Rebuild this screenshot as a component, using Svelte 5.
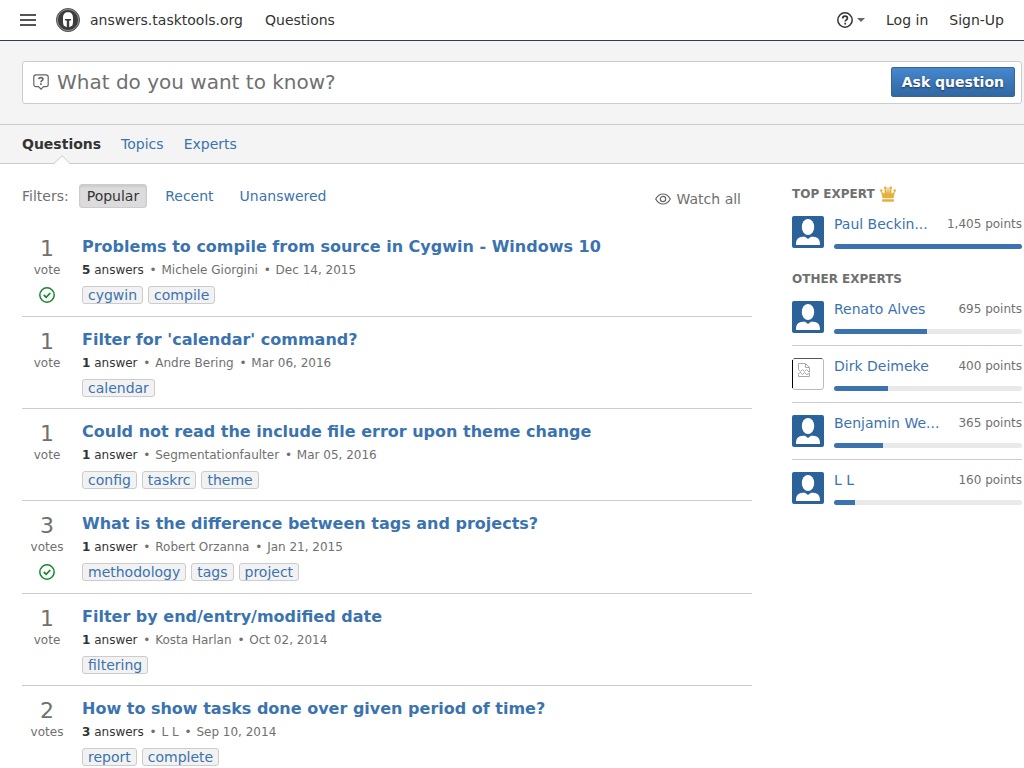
<script>
  const questions = [
    { title: 'Problems to compile from source in Cygwin - Windows 10', votes: 1, answers: 5, author: 'Michele Giorgini', date: 'Dec 14, 2015', accepted: true, tags: ['cygwin', 'compile'] },
    { title: "Filter for 'calendar' command?", votes: 1, answers: 1, author: 'Andre Bering', date: 'Mar 06, 2016', accepted: false, tags: ['calendar'] },
    { title: 'Could not read the include file error upon theme change', votes: 1, answers: 1, author: 'Segmentationfaulter', date: 'Mar 05, 2016', accepted: false, tags: ['config', 'taskrc', 'theme'] },
    { title: 'What is the difference between tags and projects?', votes: 3, answers: 1, author: 'Robert Orzanna', date: 'Jan 21, 2015', accepted: true, tags: ['methodology', 'tags', 'project'] },
    { title: 'Filter by end/entry/modified date', votes: 1, answers: 1, author: 'Kosta Harlan', date: 'Oct 02, 2014', accepted: false, tags: ['filtering'] },
    { title: 'How to show tasks done over given period of time?', votes: 2, answers: 3, author: 'L L', date: 'Sep 10, 2014', accepted: false, tags: ['report', 'complete'] }
  ];
  const top = [{ name: 'Paul Beckin...', points: '1,405', share: 100, photo: true }];
  const others = [
    { name: 'Renato Alves', points: '695', share: 49.5, photo: true },
    { name: 'Dirk Deimeke', points: '400', share: 28.5, photo: false },
    { name: 'Benjamin We...', points: '365', share: 26, photo: true },
    { name: 'L L', points: '160', share: 11.2, photo: true }
  ];
  let filter = $state('Popular');
</script>

{#snippet expert(e)}
  <li class="expert">
    {#if e.photo}
      <svg class="avatar" viewBox="0 0 32 32" aria-hidden="true">
        <rect width="32" height="32" rx="2" fill="#2a6299" />
        <ellipse cx="16" cy="11" rx="6.200" ry="8" fill="#fff" />
        <path d="M4 29c0-4.500 1-6.500 3.500-7.500 2-.8 4-.8 5.500-.8l3 2.300 3-2.300c1.500 0 3.500 0 5.500.8C27 22.500 28 24.500 28 29z" fill="#fff" />
      </svg>
    {:else}
      <svg class="avatar" viewBox="0 0 32 32" fill="none" aria-hidden="true">
        <rect x=".5" y=".5" width="31" height="31" rx="2.500" stroke="#bbb" />
        <path d="M30 .5H2" stroke="#555" />
        <path d="M.5 2v28" stroke="#000" />
        <path d="M6.500 12V5.500h7l4 4V14M13.500 5.500v4h4M6.500 11.500l2 2 2-2 2 2 2-2 3 3M6.500 18.500v-3l2-1 2 2 2-2 2 2 3-1v3z" stroke="#aaa" />
      </svg>
    {/if}
    <div class="score">
      <div class="line"><a href="#expert">{e.name}</a><span>{e.points} points</span></div>
      <div class="bar"><div class="fill" style="width: {e.share}%"></div></div>
    </div>
  </li>
{/snippet}

<header>
  <button class="plain menu" aria-label="Menu">
    <svg width="16" height="12" viewBox="0 0 16 12" aria-hidden="true"><path d="M0 1h16M0 6h16M0 11h16" stroke="#555" stroke-width="2" /></svg>
  </button>
  <a class="brand" href="#home">
    <svg width="24" height="24" viewBox="0 0 24 24" aria-hidden="true">
      <circle cx="12" cy="12" r="11.500" fill="#3c3c3c" stroke="#555" />
      <circle cx="12" cy="12" r="10.600" fill="none" stroke="#aaa" stroke-width=".8" />
      <path d="M7 10C7 6.200 8.700 4.200 12 4.200s5 2 5 5.800v4.500l-.6 3-3.200 1.700v-6.400l1.900-.5v-1.200H8.900v1.200l1.900.5v6.400l-3.200-1.700-.6-3z" fill="#fff" />
    </svg>
    <span>answers.tasktools.org</span>
  </a>
  <a class="crumb" href="#questions">Questions</a>
  <nav class="account" aria-label="Account">
    <button class="plain help" aria-label="Help">
      <svg width="16" height="16" viewBox="0 0 16 16" fill="none" stroke="#333" aria-hidden="true">
        <circle cx="8" cy="8" r="7.200" stroke-width="1.500" />
        <path d="M5.700 6.400C5.700 5 6.600 4.200 8 4.200s2.400.8 2.400 2c0 1.600-2.200 1.700-2.200 3.400M8.200 10.800v1.600" stroke-width="1.700" />
      </svg>
      <svg width="8" height="4" viewBox="0 0 8 4" aria-hidden="true"><path d="M0 0h8L4 4z" fill="#666" /></svg>
    </button>
    <a href="#login">Log in</a>
    <a href="#signup">Sign-Up</a>
  </nav>
</header>

<section class="ask">
  <form onsubmit={(e) => e.preventDefault()}>
    <svg width="16" height="16" viewBox="0 0 16 16" fill="none" stroke="#666" aria-hidden="true">
      <path d="M3 .8h10A2.200 2.200 0 0 1 15.200 3v7.500a2.200 2.200 0 0 1-2.200 2.200h-2.500L8 15.200l-2.500-2.500H3A2.200 2.200 0 0 1 .8 10.500V3A2.200 2.200 0 0 1 3 .8z" stroke-width="1.200" />
      <path d="M5.700 5.200c.2-1.100 1-1.600 2.100-1.600 1.400 0 2.200.7 2.200 1.700 0 1.400-2.100 1.300-2.100 2.900M7.900 9.200v1.700" stroke-width="1.600" />
    </svg>
    <input type="text" placeholder="What do you want to know?" aria-label="What do you want to know?" />
    <button type="submit">Ask question</button>
  </form>
</section>

<nav class="tabs" aria-label="Sections">
  <a class="current" href="#questions">Questions
    <svg class="notch" width="16" height="9" viewBox="0 0 16 9" aria-hidden="true"><path d="M0 9L8 1l8 8z" fill="#fff" /><path d="M0 8.500L8 .7l8 7.800" fill="none" stroke="#ccc" /></svg>
  </a>
  <a href="#topics">Topics</a>
  <a href="#experts">Experts</a>
</nav>

<div class="page">
  <main>
    <div class="filters">
      <span class="label">Filters:</span>
      {#each ['Popular', 'Recent', 'Unanswered'] as name}
        <button class:active={filter === name} onclick={() => (filter = name)}>{name}</button>
      {/each}
      <button class="plain watch">
        <svg width="16" height="12" viewBox="0 0 16 12" fill="none" stroke="#666" aria-hidden="true">
          <path d="M.7 6C2.500 2.700 5 1 8 1s5.500 1.700 7.300 5C13.500 9.300 11 11 8 11S2.500 9.300.7 6z" stroke-width="1.200" />
          <circle cx="8" cy="6" r="2.700" stroke-width="1.200" />
        </svg>
        Watch all
      </button>
    </div>
    {#each questions as q}
      <article>
        <div class="votes">
          <span class="count">{q.votes}</span>
          <span class="unit">{q.votes === 1 ? 'vote' : 'votes'}</span>
          {#if q.accepted}
            <svg width="16" height="16" viewBox="0 0 16 16" fill="none" stroke="#15892e" role="img" aria-label="Accepted">
              <circle cx="8" cy="8" r="7.200" stroke-width="1.500" /><path d="M4.800 8l2.400 2.300L11.300 6" stroke-width="1.800" />
            </svg>
          {/if}
        </div>
        <div class="body">
          <h2><a href="#question">{q.title}</a></h2>
          <p><span class="answers"><b>{q.answers}</b> {q.answers === 1 ? 'answer' : 'answers'}</span> <span class="dot">•</span> {q.author} <span class="dot">•</span> {q.date}</p>
          <div class="tags">{#each q.tags as tag}<a href="#tag">{tag}</a>{/each}</div>
        </div>
      </article>
    {/each}
  </main>

  <aside>
    <h3>TOP EXPERT
      <svg width="16" height="16" viewBox="0 0 16 16" fill="#e3b13f" aria-hidden="true">
        <path d="M2.500 12.200L1 5.200l3.500 2.600.1-5.300h1.400l1.100 5.100.4-6h1l.4 6L10 2.500h1.400l.1 5.300L15 5.200l-1.500 7z" />
        <circle cx="1.300" cy="4.600" r="1.300" /><circle cx="5.300" cy="1.800" r="1.400" /><circle cx="10.700" cy="1.800" r="1.400" /><circle cx="14.700" cy="4.600" r="1.300" />
        <rect x="2" y="13.200" width="12" height="2.600" rx="1" />
      </svg>
    </h3>
    <ul>{#each top as e}{@render expert(e)}{/each}</ul>
    <h3>OTHER EXPERTS</h3>
    <ul>{#each others as e}{@render expert(e)}{/each}</ul>
  </aside>
</div>

<style>
  :global(body) {
    margin: 0;
    background: #fff;
    color: #333;
    font: 14px/20px "DejaVu Sans", sans-serif;
  }
  a { color: #3b73af; text-decoration: none; }
  button, input { font: inherit; }
  .plain { border: 0; padding: 0; background: none; color: inherit; }
  svg { flex: none; display: block; }
  header {
    display: flex;
    align-items: center;
    height: 40px;
    padding: 0 20px;
    border-bottom: 1px solid #2e3d54;
  }
  header a { color: #333; }
  .menu { margin-right: 20px; }
  .brand { display: flex; align-items: center; gap: 10px; margin-right: 22px; }
  .account { display: flex; gap: 21px; margin-left: auto; }
  .help { display: flex; align-items: center; gap: 4px; }
  .ask {
    padding: 20px 2px 20px 22px;
    background: #f4f4f4;
    border-bottom: 1px solid #ccc;
  }
  form {
    display: flex;
    align-items: center;
    gap: 8px;
    padding: 5px 6px 6px 10px;
    background: #fff;
    border: 1px solid #ccc;
    border-radius: 3px;
  }
  form input {
    flex: 1;
    min-width: 0;
    height: 30px;
    box-sizing: border-box;
    padding: 0;
    border: 0;
    outline: 0;
    font-size: 20px;
    color: #333;
  }
  form input::placeholder { color: #707070; opacity: 1; }
  form button {
    height: 30px;
    padding: 0 10px;
    border: 1px solid #3b6591;
    border-radius: 2px;
    background: linear-gradient(#4687ce, #3068a2);
    color: #fff;
    font-weight: bold;
    text-shadow: 0 1px 2px rgba(0, 0, 0, 0.5);
  }
  .tabs {
    display: flex;
    gap: 20px;
    padding: 0 22px;
    background: #f4f4f4;
    border-bottom: 1px solid #ccc;
    line-height: 38px;
  }
  .current { position: relative; color: #333; font-weight: bold; }
  .notch { position: absolute; left: 50%; bottom: -1px; margin-left: -8px; }
  .page {
    display: grid;
    grid-template-columns: minmax(0, 1fr) 230px;
    gap: 40px;
    padding: 20px 2px 0 22px;
  }
  .filters { display: flex; align-items: flex-start; gap: 10px; margin-bottom: 15px; }
  .label { color: #707070; line-height: 24px; }
  .filters button:not(.watch) {
    height: 24px;
    padding: 0 7px;
    border: 1px solid transparent;
    border-radius: 3px;
    background: none;
    color: #3b73af;
  }
  .filters button.active:not(.watch) {
    border-color: #ccc;
    background: #dcdcdc;
    color: #333;
    box-shadow: inset 0 2px 2px #ccc;
  }
  .watch {
    display: flex;
    align-items: center;
    gap: 6px;
    margin: 5px 11px 0 auto;
    color: #707070;
  }
  article { display: flex; border-bottom: 1px solid #ccc; }
  .votes {
    display: flex;
    flex-direction: column;
    align-items: center;
    width: 50px;
    margin-right: 10px;
    padding: 12px 0 13px;
    color: #707070;
  }
  .count { font-size: 22px; line-height: 26px; }
  .unit { font-size: 12px; line-height: 16px; margin-bottom: 9px; }
  .body { flex: 1; min-width: 0; padding: 13px 0 11px; }
  h2 { margin: 0; font-size: 16px; line-height: 20px; }
  p { margin: 5px 0 8px; font-size: 12px; line-height: 16px; color: #707070; }
  .dot { margin: 0 1px 0 2px; }
  .answers { color: #333; }
  .tags { display: flex; gap: 5px; }
  .tags a {
    padding: 0 5px;
    border: 1px solid #ccc;
    border-radius: 3px;
    background: #f2f2f2;
    line-height: 16px;
  }
  h3 {
    display: flex;
    align-items: center;
    gap: 5px;
    margin: 0 0 12px;
    font-size: 12px;
    line-height: 20px;
    color: #707070;
  }
  ul { margin: 0 0 9px; padding: 0; list-style: none; }
  .expert {
    display: flex;
    gap: 10px;
    padding: 0 0 11px;
    margin-bottom: 12px;
    border-bottom: 1px solid #ccc;
  }
  .expert:last-child { border-bottom: 0; margin-bottom: 0; }
  .avatar { width: 32px; height: 32px; }
  .score { flex: 1; min-width: 0; }
  .line { display: flex; justify-content: space-between; line-height: 16px; }
  .line span { font-size: 12px; color: #707070; }
  .bar { height: 5px; margin-top: 12px; border-radius: 3px; background: #e9e9e9; overflow: hidden; }
  .fill { height: 100%; background: #3b73af; }
</style>
